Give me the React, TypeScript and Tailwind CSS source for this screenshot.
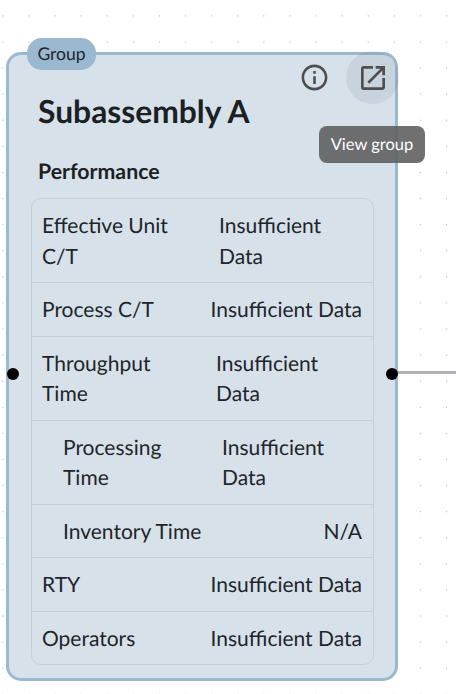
import { MdInfoOutline, MdOpenInNew } from "react-icons/md";

type Row = {
  label: string;
  value: string;
  indent?: boolean;
  labelWidth?: string;
  valueWidth?: string;
};

const rows: Row[] = [
  { label: "Effective Unit C/T", value: "Insufficient Data", valueWidth: "w-[143px]", labelWidth: "w-[150px]" },
  { label: "Process C/T", value: "Insufficient Data" },
  { label: "Throughput Time", value: "Insufficient Data", valueWidth: "w-[146px]", labelWidth: "w-[130px]" },
  { label: "Processing Time", value: "Insufficient Data", indent: true, valueWidth: "w-[140px]", labelWidth: "w-[120px]" },
  { label: "Inventory Time", value: "N/A", indent: true },
  { label: "RTY", value: "Insufficient Data" },
  { label: "Operators", value: "Insufficient Data" },
];

function MetricRow({ label, value, indent, labelWidth, valueWidth }: Row) {
  return (
    <div className="flex items-center justify-between border-b border-[#c3d0dc] pt-[12px] pr-[11px] pb-[10px] pl-[10px] leading-[30.5px] last:border-b-0">
      <div className={`${indent ? "pl-[21px]" : ""} ${labelWidth ?? ""}`}>{label}</div>
      <div className={valueWidth ?? ""}>{value}</div>
    </div>
  );
}

export default function App() {
  return (
    <div className="relative h-[694px] w-[456px] overflow-hidden bg-white bg-[radial-gradient(circle,#b8b8b8_0.7px,transparent_1px)] bg-[length:26.1px_26.1px] bg-[position:-10.15px_2.85px] font-['Lato',sans-serif] text-[#212529] [text-rendering:geometricPrecision]">
      {/* edge leaving the right handle */}
      <div className="absolute top-[371px] left-[392px] h-[3px] w-[64px] bg-[#b1b1b7]" />

      <div className="absolute top-[52px] left-[6px] h-[629px] w-[392px] rounded-[15px] border-[3px] border-[#9ab8cf] bg-[#d7e1ea] pt-[36px] pl-[29px]">
        <h1 className="text-[31.8px] leading-[40px] font-bold text-[#1c1f23]">Subassembly A</h1>
        <h2 className="mt-[27px] text-[21.3px] leading-[26px] font-bold text-[#1c1f23]">Performance</h2>
        <div className="mt-[14px] -ml-[7px] h-[467px] w-[343px] rounded-[10px] border border-[#c3d0dc] text-[21px]">
          {rows.map((row) => (
            <MetricRow key={row.label} {...row} />
          ))}
        </div>

        <div className="absolute -top-[17px] left-[18px] flex h-[32px] w-[69px] items-center justify-center rounded-[15px] bg-[#9ab8cf] text-[17.5px]">
          Group
        </div>

        <div className="absolute -top-[4px] -right-[4px] flex items-center gap-[16px]">
          <MdInfoOutline className="h-[31px] w-[31px] text-[#4e4e4e]" />
          <div className="flex h-[53px] w-[53px] items-center justify-center rounded-full bg-[#4a5a6a]/10">
            <MdOpenInNew className="h-[32px] w-[32px] text-[#4e4e4e]" />
          </div>
        </div>

        <div className="absolute top-[71px] -right-[30px] flex h-[37px] w-[106px] items-center justify-center rounded-[8px] bg-[#616161]/90 pb-[1px] text-[16.5px] text-white">
          View group
        </div>

        {/* connection handles */}
        <div className="absolute top-[312.5px] -left-[2.5px] h-[12px] w-[12px] rounded-full bg-black" />
        <div className="absolute top-[312.5px] -right-[2.5px] h-[12px] w-[12px] rounded-full bg-black" />
      </div>
    </div>
  );
}
